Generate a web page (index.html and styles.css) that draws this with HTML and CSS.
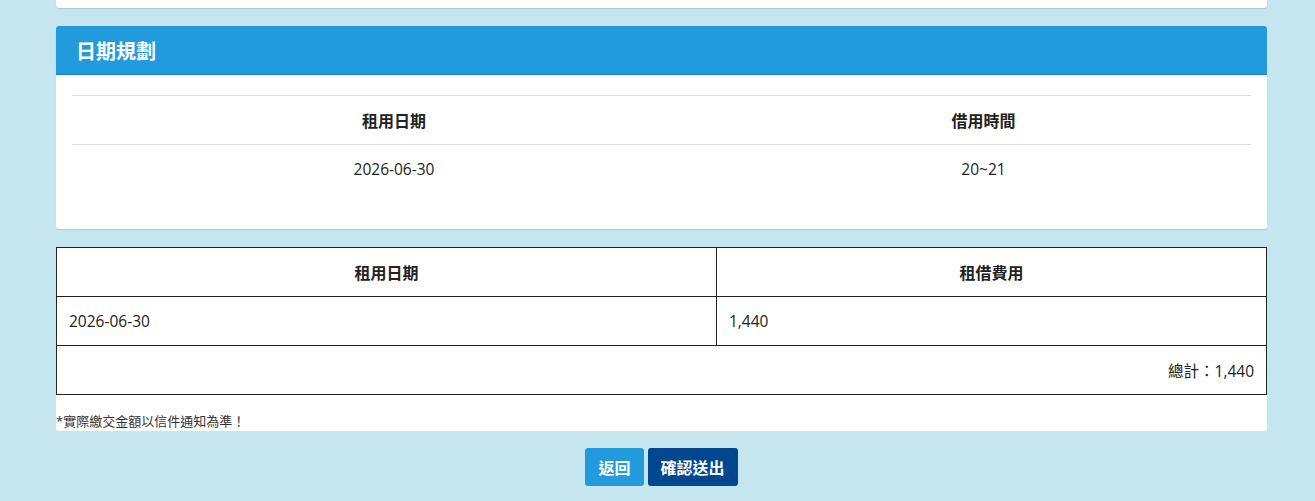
FILE: index.html
```html
<!DOCTYPE html>
<html lang="zh-Hant">
<head>
  <meta charset="UTF-8" />
  <meta name="viewport" content="width=device-width, initial-scale=1.0" />
  <title>場地租借申請</title>
  <link rel="stylesheet" href="styles.css">
</head>
<body>
  <div class="container">
    <div class="card card-prev"></div>

    <div class="card">
      <div class="card-header">
        <h2>日期規劃</h2>
      </div>
      <div class="card-body">
        <table class="plan-table">
          <thead>
            <tr>
              <th class="col-date">租用日期</th>
              <th>借用時間</th>
            </tr>
          </thead>
          <tbody>
            <tr>
              <td>2026-06-30</td>
              <td>20~21</td>
            </tr>
          </tbody>
        </table>
      </div>
    </div>

    <div class="card card-fee">
      <table class="fee-table">
        <thead>
          <tr>
            <th class="col-date">租用日期</th>
            <th>租借費用</th>
          </tr>
        </thead>
        <tbody>
          <tr>
            <td>2026-06-30</td>
            <td>1,440</td>
          </tr>
          <tr>
            <td colspan="2" class="total">總計：1,440</td>
          </tr>
        </tbody>
      </table>
      <p class="note">*實際繳交金額以信件通知為準！</p>
    </div>

    <div class="actions">
      <button class="btn btn-back">返回</button>
      <button class="btn btn-submit">確認送出</button>
    </div>
  </div>
</body>
</html>
```

FILE: styles.css
```css
body {
  margin: 0;
  font-family: 'Open Sans', 'Noto Sans CJK TC', sans-serif;
  background-color: #c5e5ef;
  color: #222;
  font-size: 15.5px;
}
.container {
  width: 1211px;
  margin: 0 48px 0 56px;
}
.card {
  background: white;
  border-radius: 3px;
  box-shadow: 0 1px 1px rgba(0,0,0,0.12);
  margin-bottom: 18px;
}
.card-prev {
  height: 8px;
  border-radius: 0 0 3px 3px;
}
.card-header {
  background-color: #229ade;
  border-bottom: 1px solid #1a84c2;
  border-radius: 3px 3px 0 0;
  height: 48px;
  display: flex;
  align-items: center;
  padding: 0 20px;
}
.card-header h2 {
  margin: 0;
  color: white;
  font-size: 20px;
  font-weight: 700;
}
.card-body {
  padding: 20px 16px 36px;
}
table {
  width: 100%;
  border-collapse: collapse;
}
.plan-table th,
.plan-table td {
  text-align: center;
  height: 48px;
  border-top: 1px solid #ddd;
  padding: 0;
}
.plan-table th {
  font-weight: 700;
  font-size: 16px;
}
.plan-table .col-date {
  width: 644px;
}
.card-fee {
  box-shadow: none;
  border-radius: 0 0 3px 3px;
  margin-bottom: 17px;
}
.fee-table th,
.fee-table td {
  border: 1px solid #222;
  height: 48px;
  padding: 0 12px;
}
.fee-table th {
  font-weight: 700;
  font-size: 16px;
  text-align: center;
}
.fee-table td {
  text-align: left;
}
.fee-table .col-date {
  width: 635px;
}
.fee-table .total {
  text-align: right;
}
.note {
  margin: 16px 0 0;
  font-size: 13px;
  line-height: 20px;
  color: #333;
}
.actions {
  display: flex;
  justify-content: center;
  gap: 4px;
}
.btn {
  border: none;
  border-radius: 3px;
  color: white;
  font-family: 'Noto Sans CJK TC', sans-serif;
  font-size: 16px;
  font-weight: 700;
  height: 38px;
  padding: 0 13px;
  cursor: pointer;
}
.btn-back {
  background-color: #229ade;
}
.btn-submit {
  background-color: #00478e;
}
```
